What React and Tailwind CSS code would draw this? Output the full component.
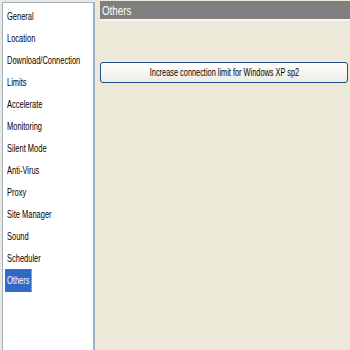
import React from "react";

const items = [
  "General",
  "Location",
  "Download/Connection",
  "Limits",
  "Accelerate",
  "Monitoring",
  "Silent Mode",
  "Anti-Virus",
  "Proxy",
  "Site Manager",
  "Sound",
  "Scheduler",
  "Others",
];

const font = { fontFamily: '"Liberation Sans", Arial, sans-serif' };

export default function App() {
  const selected = "Others";
  return (
    <div className="flex h-[350px] w-[350px] overflow-hidden bg-[#ECE9D8] text-black" style={font}>
      {/* Category list */}
      <div className="ml-[2px] mt-[2px] h-[348px] w-[93px] border-l border-t border-r-2 border-[#9DB0C4] bg-white pt-[2px]">
        {items.map((item) => (
          <div key={item} className="flex h-[22px] items-center pl-[2px]">
            <span
              className={`inline-block origin-left scale-x-[0.68] whitespace-nowrap px-[2px] text-[11px] leading-[21px] ${
                item === selected
                  ? "border border-dotted border-[#8a6a2a] bg-[#316AC5] text-white"
                  : "border border-transparent"
              }`}
            >
              {item}
            </span>
          </div>
        ))}
      </div>

      {/* Settings pane */}
      <div className="flex flex-1 flex-col pl-[5px] pt-[1px]">
        <div className="h-[20px] border-b-2 border-[#F7F6F0] bg-[#7F7F7F] pl-[2px] text-[13px] leading-[19px] text-white">
          <span className="inline-block origin-left scale-x-[0.75]">Others</span>
        </div>
        <button
          className="mr-[2px] mt-[41px] h-[21px] rounded-[3px] border border-[#1F4E8A] bg-gradient-to-b from-white to-[#ECEBE6] text-[11px] text-black"
          style={font}
        >
          <span className="inline-block scale-x-[0.67] whitespace-nowrap">
            Increase connection limit for Windows XP sp2
          </span>
        </button>
      </div>
    </div>
  );
}
